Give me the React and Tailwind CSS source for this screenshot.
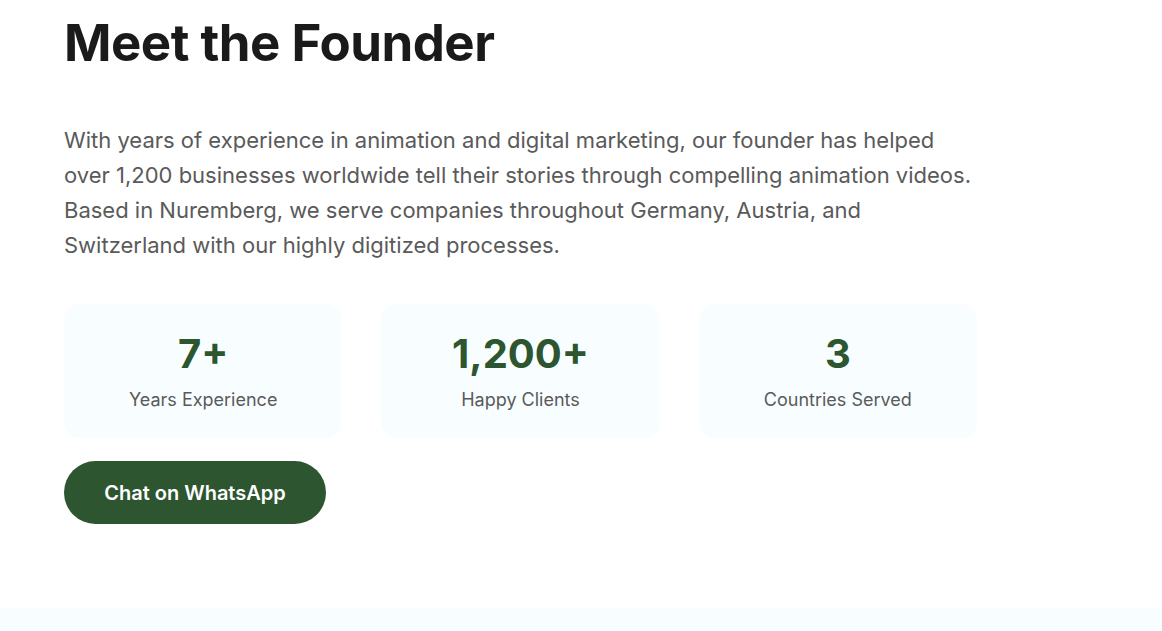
export default function App() {
  const stats = [
    { value: '7+', label: 'Years Experience' },
    { value: '1,200+', label: 'Happy Clients' },
    { value: '3', label: 'Countries Served' }
  ]

  return (
    <div className="bg-white font-['Inter',sans-serif]">
      <section className="px-[64px] pt-[12px] pb-[84px]">
        <div className="w-[913px]">
          <h1 className="text-[51px] leading-[1.2] font-bold tracking-[-0.01em] text-[#1a1a1a]">
            Meet the Founder
          </h1>
          <p className="mt-[50px] text-[22px] leading-[35px] text-[#5a5a5a]">
            With years of experience in animation and digital marketing, our founder has helped over 1,200
            businesses worldwide tell their stories through compelling animation videos. Based in Nuremberg, we
            serve companies throughout Germany, Austria, and Switzerland with our highly digitized processes.
          </p>
          <div className="mt-[41px] grid grid-cols-3 gap-[39px]">
            {stats.map((s) => (
              <div key={s.label} className="flex h-[134px] flex-col items-center justify-center rounded-2xl bg-[#f8feff]">
                <p className="text-[40px] leading-[48px] font-bold text-[#2c5530]">{s.value}</p>
                <p className="mt-[9px] text-[18px] leading-[26px] text-[#5a5a5a]">{s.label}</p>
              </div>
            ))}
          </div>
          <button className="mt-[23px] h-[63px] w-[262px] rounded-full bg-[#2c5530] text-[20px] font-semibold text-white">
            Chat on WhatsApp
          </button>
        </div>
      </section>
      <section className="h-[23px] bg-[#f8feff]" />
    </div>
  )
}
